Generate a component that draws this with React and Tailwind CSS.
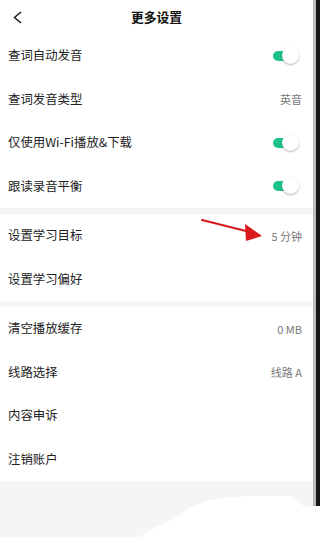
import React from 'react';

const sections = [
  [
    { label: '查词自动发音', toggle: true },
    { label: '查词发音类型', value: '英音' },
    { label: '仅使用Wi-Fi播放&下载', toggle: true },
    { label: '跟读录音平衡', toggle: true },
  ],
  [
    { label: '设置学习目标', value: '5 分钟', arrow: true },
    { label: '设置学习偏好' },
  ],
  [
    { label: '清空播放缓存', value: '0 MB' },
    { label: '线路选择', value: '线路 A' },
    { label: '内容申诉' },
    { label: '注销账户' },
  ],
];

function Toggle() {
  return (
    <div className="relative w-[26px] h-[18px] mr-[3px]">
      <div className="absolute left-0 top-[4px] w-[20px] h-[10px] rounded-full bg-[#1cc28a]" />
      <div className="absolute right-0 top-0 w-[17px] h-[17px] rounded-full bg-white shadow-[0_1px_2px_rgba(0,0,0,0.3)]" />
    </div>
  );
}

function Row({ item }) {
  return (
    <div className="relative flex items-center justify-between h-[43.5px] pl-[8px] pr-[11px] bg-white">
      <span className="text-[12.4px] text-[#222]">{item.label}</span>
      {item.toggle && <Toggle />}
      {item.value && <span className="text-[11px] text-[#777]">{item.value}</span>}
      {item.arrow && (
        <svg className="absolute left-[198px] top-[4px]" width="70" height="30" viewBox="0 0 70 30">
          <line x1="4" y1="2" x2="52" y2="14" stroke="#d9191c" strokeWidth="2" strokeLinecap="round" />
          <polygon points="47,6 64,18 48,23" fill="#d9191c" />
        </svg>
      )}
    </div>
  );
}

export default function App() {
  return (
    <div
      className="relative w-[320px] h-[546px] overflow-hidden bg-white"
      style={{ fontFamily: '"Noto Sans CJK SC", "Noto Sans", sans-serif' }}
    >
      <div className="flex items-start">
        <div className="w-[313px] shrink-0 h-[537px] bg-[#f5f5f5] flex flex-col">
          <div className="relative h-[34px] bg-white flex items-center justify-center">
            <svg className="absolute left-0 top-0" width="34" height="34" viewBox="0 0 34 34">
              <path d="M21 12 L14.5 17.5 L21 23" fill="none" stroke="#222" strokeWidth="1.6" />
            </svg>
            <span className="text-[12.8px] font-bold text-[#111]">更多设置</span>
          </div>
          {sections.map((sec, i) => (
            <div key={i} className={i > 0 ? 'mt-[6px]' : ''}>
              {sec.map((item) => (
                <Row key={item.label} item={item} />
              ))}
            </div>
          ))}
        </div>
        <div className="w-[3px] shrink-0 h-[506px] bg-[#bbbbbb]" />
        <div className="w-[4px] shrink-0 h-[506px] bg-[#161616]" />
      </div>
      <svg className="absolute left-0 top-[490px]" width="320" height="56" viewBox="0 0 320 56">
        <path
          d="M140 47 C150 40 165 32 175 28 C185 20 195 14 210 10 C235 5 265 6 290 6 C296 8 298 12 305 17 L320 16 L320 56 L140 56 Z"
          fill="#ffffff"
        />
      </svg>
    </div>
  );
}
